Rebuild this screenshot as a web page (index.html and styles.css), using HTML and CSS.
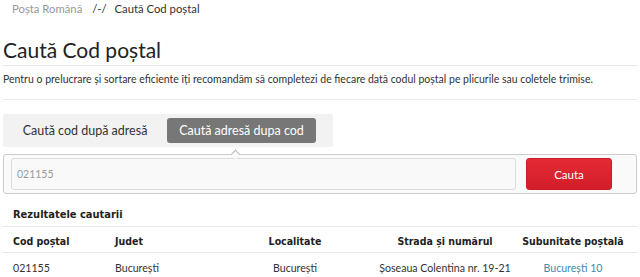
FILE: index.html
```html
<!DOCTYPE html>
<html lang="ro">
<head>
    <meta charset="UTF-8">
    <title>Caută Cod poștal</title>
    <link rel="stylesheet" href="styles.css">
</head>
<body>
    <div id="page">
        <div class="crumbs">
            <span class="home">Poșta Română</span>
            <span class="sep">/-/</span>
            <span class="here">Caută Cod poștal</span>
        </div>
        <h1 class="title">Caută Cod poștal</h1>
        <p class="intro">Pentru o prelucrare și sortare eficiente îți recomandăm să completezi de fiecare dată codul poștal pe plicurile sau coletele trimise.</p>

        <div class="tabs">
            <div class="tab">Caută cod după adresă</div>
            <div class="tab active">Caută adresă dupa cod</div>
        </div>
        <div class="search">
            <input class="code" type="text" value="021155">
            <button class="go">Cauta</button>
        </div>

        <div class="results">
            <div class="res-title">Rezultatele cautarii</div>
            <div class="row head">
                <div>Cod poștal</div>
                <div>Judet</div>
                <div class="c">Localitate</div>
                <div class="c">Strada și numărul</div>
                <div class="c">Subunitate poștală</div>
            </div>
            <div class="row">
                <div>021155</div>
                <div>București</div>
                <div class="c">București</div>
                <div class="c">Șoseaua Colentina nr. 19-21</div>
                <div class="c"><a href="#">București 10</a></div>
            </div>
        </div>
    </div>
</body>
</html>
```

FILE: styles.css
```css
* {
    margin: 0;
    padding: 0;
    box-sizing: border-box;
}

body {
    font-family: Lato, "Open Sans", sans-serif;
    color: #333;
    background: #fff;
}

#page {
    padding: 0 3px;
}

.crumbs {
    height: 17px;
    line-height: 17px;
    padding-left: 9px;
    font-size: 11.3px;
}
.crumbs .home {
    color: #999;
}
.crumbs .sep {
    margin: 0 5px 0 7px;
    color: #333;
}

.title {
    padding-top: 18px;
    line-height: 30px;
    font-size: 21px;
    font-weight: normal;
    color: #222;
    border-bottom: 1px solid #e8e8e8;
}

.intro {
    padding: 5px 0 11px;
    line-height: 17px;
    font-size: 10.5px;
    white-space: nowrap;
    border-bottom: 1px solid #ececec;
}

.tabs {
    display: flex;
    align-items: center;
    width: 330px;
    height: 33px;
    margin-top: 14px;
    padding: 0 4px;
    background: #f2f2f2;
    border-radius: 2px;
}
.tabs .tab {
    width: 156px;
    margin-right: 4px;
    text-align: center;
    font-size: 12.5px;
    color: #333;
}
.tabs .tab.active {
    width: 149px;
    height: 25px;
    line-height: 25px;
    background: #777;
    color: #fff;
    border-radius: 3px;
}

.search {
    position: relative;
    display: flex;
    gap: 10px;
    margin-top: 7px;
    padding: 3px 7px;
    background: #fafafa;
    border: 1px solid #ccc;
    border-radius: 3px;
}
.search::before {
    content: "";
    position: absolute;
    top: -4px;
    left: 228px;
    width: 6px;
    height: 6px;
    background: #fafafa;
    border-top: 1px solid #bbb;
    border-left: 1px solid #bbb;
    transform: rotate(45deg);
}
.search .code {
    width: 505px;
    height: 32px;
    padding: 0 5px;
    font-family: inherit;
    font-size: 10.5px;
    color: #999;
    background: #f9f9f9;
    border: 1px solid #ddd;
    border-radius: 3px;
    outline: none;
}
.search .go {
    width: 86px;
    height: 32px;
    font-family: inherit;
    font-size: 11.5px;
    color: #fff;
    background: linear-gradient(#e42a35, #d21e2a);
    border: 1px solid #c81d28;
    border-radius: 3px;
    cursor: pointer;
}

.results .res-title {
    padding: 12px 0 3px 10px;
    line-height: 17px;
    font-family: "DejaVu Sans Condensed", "DejaVu Sans", sans-serif;
    font-size: 11px;
    font-weight: bold;
    color: #222;
    border-bottom: 1px solid #e8e8e8;
}
.results .row {
    display: grid;
    grid-template-columns: 102px 110px 140px 160px 96px;
    padding: 7px 0 0 10px;
    line-height: 17px;
    font-size: 10.6px;
}
.results .row.head {
    padding: 6px 0 2px 10px;
    font-family: "DejaVu Sans Condensed", "DejaVu Sans", sans-serif;
    font-size: 10.5px;
    font-weight: bold;
    color: #222;
    border-bottom: 1px solid #e8e8e8;
}
.results .row .c {
    justify-self: center;
    white-space: nowrap;
}
.results .row a {
    color: #3f8ab0;
    text-decoration: none;
}
```
